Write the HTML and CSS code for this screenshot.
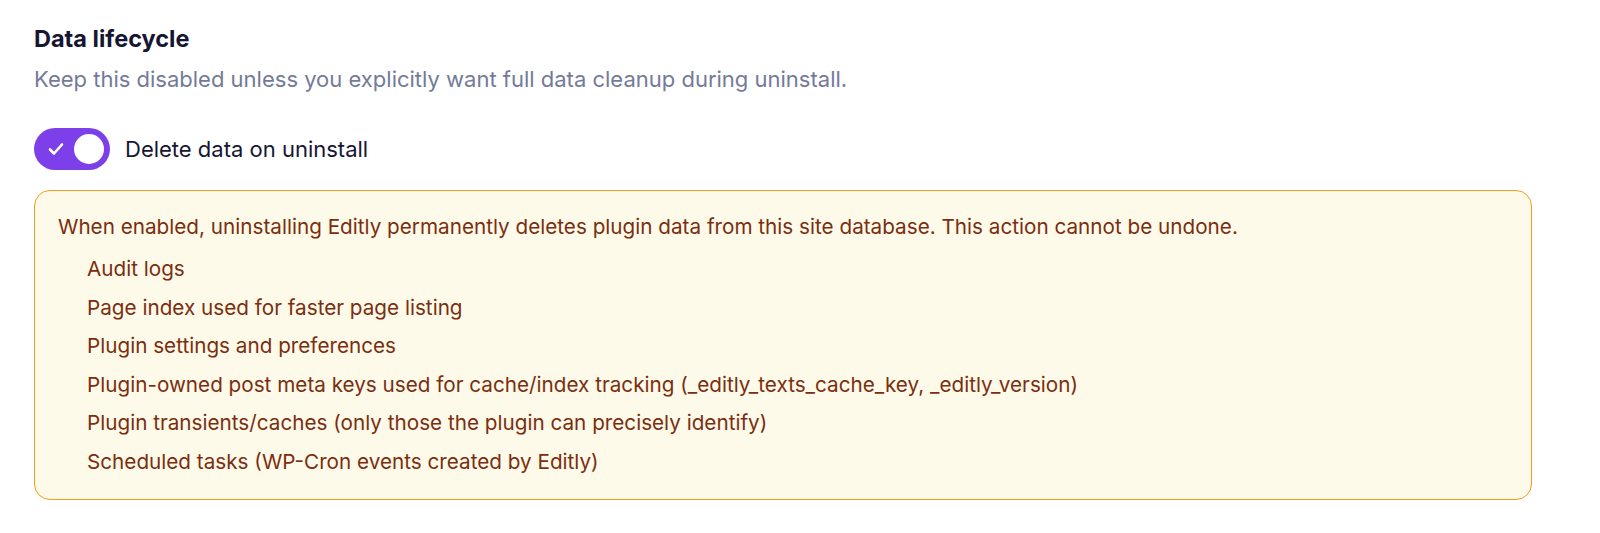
FILE: index.html
```html
<!DOCTYPE html>
<html lang="en">

<head>
  <meta charset="UTF-8">
  <title>Data lifecycle</title>
  <link rel="stylesheet" href="styles.css">
</head>

<body>
  <section class="settings-section">
    <h2 class="section-title">Data lifecycle</h2>
    <p class="section-desc">Keep this disabled unless you explicitly want full data cleanup during uninstall.</p>

    <label class="toggle-row">
      <span class="toggle is-on">
        <svg class="toggle-check" viewBox="0 0 16 14" width="16" height="14">
          <path d="M2 7.5l4 4L14 2.5" fill="none" stroke="#fff" stroke-width="2.6" stroke-linecap="round" stroke-linejoin="round" />
        </svg>
        <span class="toggle-knob"></span>
      </span>
      <span class="toggle-label">Delete data on uninstall</span>
    </label>

    <div class="warning-box">
      <p class="warning-text">When enabled, uninstalling Editly permanently deletes plugin data from this site database. This action cannot be undone.</p>
      <ul class="warning-list">
        <li>Audit logs</li>
        <li>Page index used for faster page listing</li>
        <li>Plugin settings and preferences</li>
        <li>Plugin-owned post meta keys used for cache/index tracking (_editly_texts_cache_key, _editly_version)</li>
        <li>Plugin transients/caches (only those the plugin can precisely identify)</li>
        <li>Scheduled tasks (WP-Cron events created by Editly)</li>
      </ul>
    </div>
  </section>
</body>

</html>
```

FILE: styles.css
```css
body {
  margin: 0;
  padding: 0;
  background: #fff;
  font-family: 'Inter', 'Noto Sans', Arial, sans-serif;
  -webkit-font-smoothing: antialiased;
}

.settings-section {
  padding: 24px 68px 0 34px;
}

.section-title {
  margin: 0;
  font-size: 23.5px;
  line-height: 30px;
  font-weight: 700;
  color: #161633;
}

.section-desc {
  margin: 10px 0 0;
  font-size: 22px;
  line-height: 30px;
  color: #737b98;
}

.toggle-row {
  display: flex;
  align-items: center;
  gap: 15px;
  margin-top: 34px;
  cursor: pointer;
}

.toggle {
  position: relative;
  display: flex;
  align-items: center;
  justify-content: space-between;
  box-sizing: border-box;
  width: 76px;
  height: 42px;
  padding: 0 6px 0 14px;
  border-radius: 21px;
  background: #7c3fe9;
}

.toggle-knob {
  width: 30px;
  height: 30px;
  border-radius: 50%;
  background: #fff;
}

.toggle-label {
  font-size: 22px;
  color: #161633;
}

.warning-box {
  margin-top: 20px;
  padding: 22px 23px 23px;
  border: 1.5px solid #f59e1b;
  border-radius: 16px;
  background: #fefae9;
  color: #7a2e10;
}

.warning-text {
  margin: 0;
  font-size: 20.7px;
  line-height: 28px;
}

.warning-list {
  list-style: none;
  margin: 14px 0 0;
  padding: 0 0 0 29px;
  font-size: 20.7px;
  line-height: 28px;
}

.warning-list li+li {
  margin-top: 10.5px;
}
```
